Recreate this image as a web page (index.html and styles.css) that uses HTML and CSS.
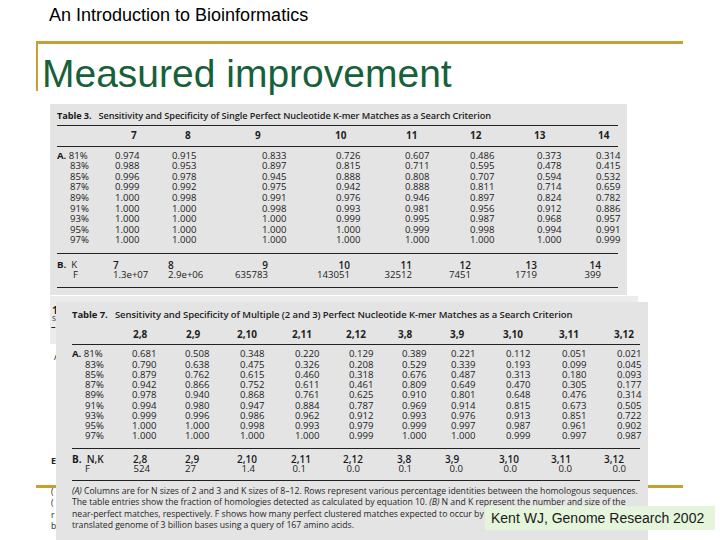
FILE: index.html
```html
<!DOCTYPE html>
<html lang="en">
<head>
<meta charset="utf-8">
<title>Measured improvement</title>
<link rel="stylesheet" href="styles.css">
</head>
<body>
<div class="slide">
  <div class="course">An Introduction to Bioinformatics</div>
  <div class="frame">
    <h1 class="title">Measured improvement</h1>
  </div>
  <div class="gold-bottom"></div>

  <div class="panel panel-t3">
    <div class="tcaption"><b>Table 3.</b>&nbsp;&nbsp; Sensitivity and Specificity of Single Perfect Nucleotide K-mer Matches as a Search Criterion</div>
    <div class="t3-head">
      <span></span><span>7</span><span>8</span><span>9</span><span>10</span><span>11</span><span>12</span><span>13</span><span>14</span>
    </div>
    <div class="t3-a">
      <span class="lab"><b>A.</b> 81%</span><span>0.974</span><span>0.915</span><span>0.833</span><span>0.726</span><span>0.607</span><span>0.486</span><span>0.373</span><span>0.314</span>
      <span class="lab sub">83%</span><span>0.988</span><span>0.953</span><span>0.897</span><span>0.815</span><span>0.711</span><span>0.595</span><span>0.478</span><span>0.415</span>
      <span class="lab sub">85%</span><span>0.996</span><span>0.978</span><span>0.945</span><span>0.888</span><span>0.808</span><span>0.707</span><span>0.594</span><span>0.532</span>
      <span class="lab sub">87%</span><span>0.999</span><span>0.992</span><span>0.975</span><span>0.942</span><span>0.888</span><span>0.811</span><span>0.714</span><span>0.659</span>
      <span class="lab sub">89%</span><span>1.000</span><span>0.998</span><span>0.991</span><span>0.976</span><span>0.946</span><span>0.897</span><span>0.824</span><span>0.782</span>
      <span class="lab sub">91%</span><span>1.000</span><span>1.000</span><span>0.998</span><span>0.993</span><span>0.981</span><span>0.956</span><span>0.912</span><span>0.886</span>
      <span class="lab sub">93%</span><span>1.000</span><span>1.000</span><span>1.000</span><span>0.999</span><span>0.995</span><span>0.987</span><span>0.968</span><span>0.957</span>
      <span class="lab sub">95%</span><span>1.000</span><span>1.000</span><span>1.000</span><span>1.000</span><span>0.999</span><span>0.998</span><span>0.994</span><span>0.991</span>
      <span class="lab sub">97%</span><span>1.000</span><span>1.000</span><span>1.000</span><span>1.000</span><span>1.000</span><span>1.000</span><span>1.000</span><span>0.999</span>
    </div>
    <div class="t3-b">
      <span class="lab"><b>B.</b>&nbsp; K</span><span class="k">7</span><span class="k">8</span><span class="k">9</span><span class="k">10</span><span class="k">11</span><span class="k">12</span><span class="k">13</span><span class="k">14</span>
      <span class="lab subf">F</span><span>1.3e+07</span><span>2.9e+06</span><span>635783</span><span>143051</span><span>32512</span><span>7451</span><span>1719</span><span>399</span>
    </div>
  </div>

  <div class="panel panel-mid">
    <div class="mid-top">
      <span class="mid-one">1</span>
      <span class="mid-s">S</span>
      <span class="mid-dash">–</span>
    </div>
    <div class="mid-rest">
      <span class="mid-a">A</span>
      <span class="mid-e">E</span>
      <span class="mid-foot">(<br>(<br>r<br>b</span>
    </div>
  </div>

  <div class="panel panel-t7">
    <div class="tcaption t7cap"><b>Table 7.</b>&nbsp;&nbsp; Sensitivity and Specificity of Multiple (2 and 3) Perfect Nucleotide K-mer Matches as a Search Criterion</div>
    <div class="t7-head">
      <span></span><span>2,8</span><span>2,9</span><span>2,10</span><span>2,11</span><span>2,12</span><span>3,8</span><span>3,9</span><span>3,10</span><span>3,11</span><span>3,12</span>
    </div>
    <div class="t7-a">
      <span class="lab"><b>A.</b> 81%</span><span>0.681</span><span>0.508</span><span>0.348</span><span>0.220</span><span>0.129</span><span>0.389</span><span>0.221</span><span>0.112</span><span>0.051</span><span>0.021</span>
      <span class="lab sub7">83%</span><span>0.790</span><span>0.638</span><span>0.475</span><span>0.326</span><span>0.208</span><span>0.529</span><span>0.339</span><span>0.193</span><span>0.099</span><span>0.045</span>
      <span class="lab sub7">85%</span><span>0.879</span><span>0.762</span><span>0.615</span><span>0.460</span><span>0.318</span><span>0.676</span><span>0.487</span><span>0.313</span><span>0.180</span><span>0.093</span>
      <span class="lab sub7">87%</span><span>0.942</span><span>0.866</span><span>0.752</span><span>0.611</span><span>0.461</span><span>0.809</span><span>0.649</span><span>0.470</span><span>0.305</span><span>0.177</span>
      <span class="lab sub7">89%</span><span>0.978</span><span>0.940</span><span>0.868</span><span>0.761</span><span>0.625</span><span>0.910</span><span>0.801</span><span>0.648</span><span>0.476</span><span>0.314</span>
      <span class="lab sub7">91%</span><span>0.994</span><span>0.980</span><span>0.947</span><span>0.884</span><span>0.787</span><span>0.969</span><span>0.914</span><span>0.815</span><span>0.673</span><span>0.505</span>
      <span class="lab sub7">93%</span><span>0.999</span><span>0.996</span><span>0.986</span><span>0.962</span><span>0.912</span><span>0.993</span><span>0.976</span><span>0.913</span><span>0.851</span><span>0.722</span>
      <span class="lab sub7">95%</span><span>1.000</span><span>1.000</span><span>0.998</span><span>0.993</span><span>0.979</span><span>0.999</span><span>0.997</span><span>0.987</span><span>0.961</span><span>0.902</span>
      <span class="lab sub7">97%</span><span>1.000</span><span>1.000</span><span>1.000</span><span>1.000</span><span>0.999</span><span>1.000</span><span>1.000</span><span>0.999</span><span>0.997</span><span>0.987</span>
    </div>
    <div class="t7-b">
      <div class="t7-nk">
        <span class="lab"><b>B.</b>&nbsp; N,K</span><span>2,8</span><span>2,9</span><span>2,10</span><span>2,11</span><span>2,12</span><span>3,8</span><span>3,9</span><span>3,10</span><span>3,11</span><span>3,12</span>
      </div>
      <div class="t7-f">
        <span class="lab">F</span><span>524</span><span>27</span><span>1.4</span><span>0.1</span><span>0.0</span><span>0.1</span><span>0.0</span><span>0.0</span><span>0.0</span><span>0.0</span>
      </div>
    </div>
    <div class="footnote">
      <div><i>(A)</i> Columns are for N sizes of 2 and 3 and K sizes of 8–12. Rows represent various percentage identities between the homologous sequences.</div>
      <div>The table entries show the fraction of homologies detected as calculated by equation 10. <i>(B)</i> N and K represent the number and size of the</div>
      <div>near-perfect matches, respectively. F shows how many perfect clustered matches expected to occur by chance according to equation 11 in a</div>
      <div>translated genome of 3 billion bases using a query of 167 amino acids.</div>
    </div>
  </div>

  <div class="cite">Kent WJ, Genome Research 2002</div>
</div>
</body>
</html>
```

FILE: styles.css
```css
body {
  margin: 0;
  background: #ffffff;
  font-family: "Liberation Sans", Arial, sans-serif;
}

.slide {
  position: relative;
  width: 720px;
  height: 540px;
  overflow: hidden;
  background: #ffffff;
}

.course {
  padding: 5px 0 0 49px;
  height: 20px;
  line-height: 20px;
  font-size: 18px;
  color: #000;
}

.frame {
  margin: 16px 0 0 36px;
  width: 645px;
  height: 47px;
  border-top: 3px solid #c5a032;
  border-left: 2px solid #c5a032;
}

.title {
  margin: 0;
  padding: 8px 0 0 4px;
  font-size: 39px;
  line-height: 44px;
  font-weight: normal;
  color: #17613a;
  white-space: nowrap;
}

.gold-bottom {
  position: absolute;
  left: 36px;
  top: 485px;
  width: 647px;
  height: 3px;
  background: #c5a032;
}

/* scanned table images, stacked like pasted pictures */
.panel {
  position: absolute;
  box-sizing: border-box;
  font-family: "Open Sans", "Liberation Sans", sans-serif;
  color: #222;
  font-size: 9.6px;
}

.panel b { font-weight: 700; color: #1a1a1a; }

.panel-t3 {
  left: 50px;
  top: 104px;
  width: 577px;
  height: 191px;
  background: #e4e4e4;
  padding: 0 9px 0 7px;
  z-index: 3;
}

.tcaption {
  padding: 6px 0 3px;
  line-height: 12px;
  font-weight: 600;
  font-size: 9.2px;
  letter-spacing: -0.08px;
  color: #222;
  white-space: nowrap;
  border-bottom: 1.5px solid #222;
}

.t3-head {
  display: grid;
  grid-template-columns: 74px 54px 70px 80px 71px 64px 64px 64px 1fr;
  padding: 3px 0 4.5px;
  line-height: 12px;
  font-size: 10px;
  font-weight: 700;
  color: #1e1e1e;
  border-bottom: 1.5px solid #222;
}

.t3-a {
  display: grid;
  grid-template-columns: 58px 57px 90px 74px 69px 65px 67px 59px 1fr;
  padding: 4.2px 0 6.8px;
  line-height: 10.6px;
  border-bottom: 1.5px solid #222;
}

.lab { white-space: nowrap; }
.sub { padding-left: 13px; }
.sub7 { padding-left: 13px; }

.t3-b {
  display: grid;
  grid-template-columns: 56px 55px 42px 58px 82px 62px 59px 66px 64px;
  padding: 6px 0 7px;
  line-height: 10px;
  border-bottom: 1.5px solid #222;
}

.t3-b > span:nth-child(9n+4),
.t3-b > span:nth-child(9n+5),
.t3-b > span:nth-child(9n+6),
.t3-b > span:nth-child(9n+7),
.t3-b > span:nth-child(9n+8),
.t3-b > span:nth-child(9n+9) {
  text-align: right;
}

.t3-b .k { color: #1a1a1a; font-weight: 600; font-size: 10px; }
.subf { padding-left: 16px; }

.panel-mid {
  left: 50px;
  top: 296px;
  width: 588px;
  height: 244px;
  z-index: 2;
}

.mid-top {
  position: relative;
  height: 48px;
  background: #ececec;
}

.mid-one {
  position: absolute;
  left: 2px;
  top: 6px;
  font-weight: 700;
  font-size: 11px;
  color: #222;
}

.mid-s {
  position: absolute;
  left: 2px;
  top: 18px;
  font-size: 7px;
}

.mid-dash {
  position: absolute;
  left: 1px;
  top: 24px;
  font-size: 9px;
  font-weight: 700;
}

.mid-rest {
  position: relative;
  height: 196px;
}

.mid-a {
  position: absolute;
  left: 4px;
  top: 6px;
  font-size: 9px;
}

.mid-e {
  position: absolute;
  left: 1px;
  top: 110px;
  font-size: 9px;
  font-weight: 700;
}

.mid-foot {
  position: absolute;
  left: 1px;
  top: 142px;
  font-size: 8.5px;
  line-height: 11.3px;
}

.panel-t7 {
  left: 56px;
  top: 302px;
  width: 592px;
  height: 238px;
  background: #e4e4e4;
  padding: 0 8px 0 16px;
  z-index: 4;
}

.t7cap {
  padding: 6px 0 6px;
  line-height: 14px;
  border-bottom: none;
  font-size: 9.5px;
}

.t7-head {
  display: grid;
  grid-template-columns: 61px 53px 51px 55px 54px 52px 52px 53px 56px 55px 1fr;
  padding: 0 0 4px;
  line-height: 12px;
  font-size: 10px;
  font-weight: 700;
  color: #1e1e1e;
  border-bottom: 1.5px solid #222;
}

.t7-a {
  display: grid;
  grid-template-columns: 60px 53px 55px 55px 54px 53px 49px 55px 56px 55px 1fr;
  padding: 4.4px 0 6.3px;
  line-height: 10.25px;
  border-bottom: 1.5px solid #222;
}

.t7-b {
  padding: 5px 0 6.5px;
  line-height: 10px;
  border-bottom: 1.5px solid #222;
}

.t7-nk {
  display: grid;
  grid-template-columns: 61px 52px 52px 54px 52px 54px 48px 54px 52px 53px 1fr;
  font-weight: 600;
  font-size: 10px;
  color: #1a1a1a;
}

.t7-f {
  display: grid;
  grid-template-columns: 28px 50px 46px 59px 51px 54px 52px 51px 54px 55px 54px;
}

.t7-f > span { text-align: right; }
.t7-f > span.lab { text-align: left; padding-left: 13px; }

.footnote {
  padding-top: 4.5px;
  line-height: 11.3px;
  font-size: 8.7px;
  letter-spacing: -0.03px;
  color: #262626;
  white-space: nowrap;
}

.cite {
  position: absolute;
  left: 485px;
  top: 506px;
  width: 230px;
  height: 24px;
  box-sizing: border-box;
  padding-left: 6px;
  line-height: 25px;
  background: #e4f5dc;
  font-size: 14px;
  color: #1a1a1a;
  white-space: nowrap;
  z-index: 5;
}
```
